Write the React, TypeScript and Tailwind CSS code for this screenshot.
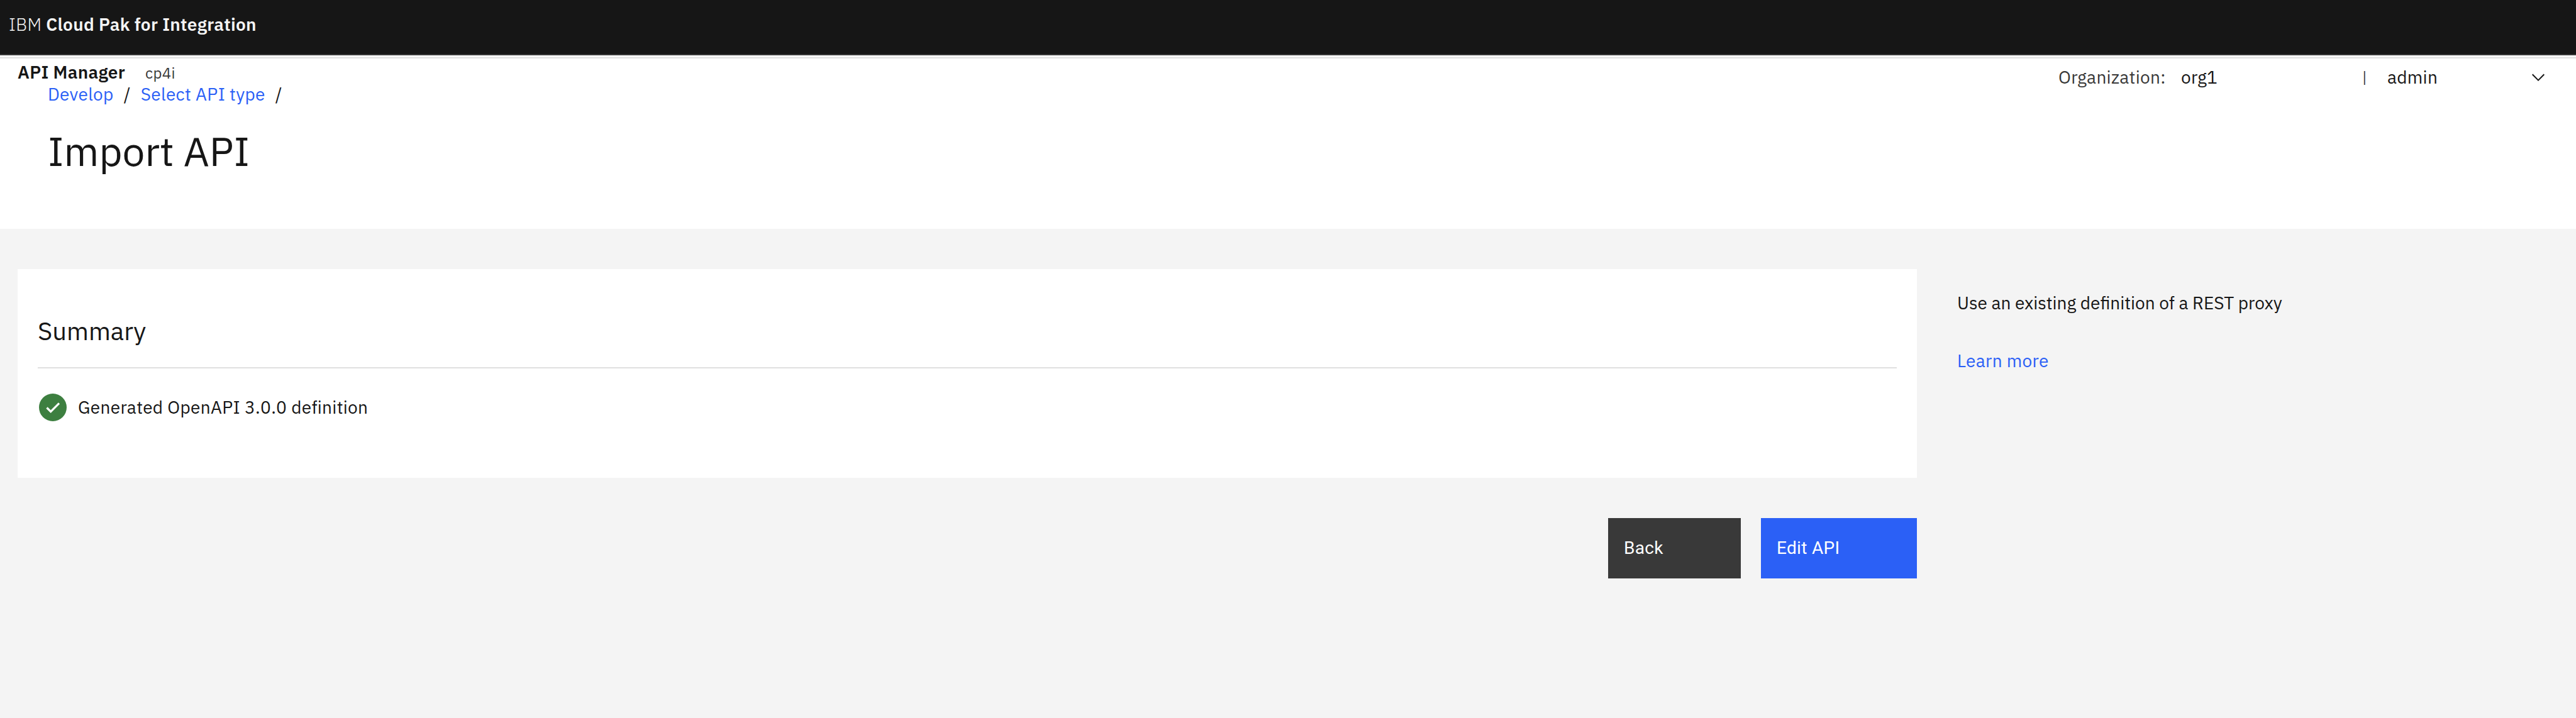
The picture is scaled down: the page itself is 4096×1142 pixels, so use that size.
import type { ReactNode } from "react";

function ChevronDown() {
  return (
    <svg className="h-8 w-8" viewBox="0 0 16 16" fill="currentColor" aria-hidden="true">
      <path d="M8 11L3 6l.7-.7L8 9.6l4.3-4.3.7.7z" />
    </svg>
  );
}

function CheckmarkFilled() {
  return (
    <svg className="h-[44px] w-[44px] text-[#3d7f40]" viewBox="0 0 44 44" aria-hidden="true">
      <circle cx="22" cy="22" r="22" fill="currentColor" />
      <path d="M12.5 22.5L18.7 28.7L32 15.4" fill="none" stroke="#fff" strokeWidth="3.2" />
    </svg>
  );
}

function Link({ children }: { children: ReactNode }) {
  return <a className="text-[#2b60f6]">{children}</a>;
}

function TopBar() {
  return (
    <header className="h-[88px] border-b-2 border-[#393939] bg-[#161616] pt-[21px] pl-[14px] leading-9 whitespace-pre text-[#f4f4f4]">
      <span className="font-light">IBM </span>
      <span className="font-semibold">Cloud Pak for Integration</span>
    </header>
  );
}

function PageHeader() {
  return (
    <section className="flex h-[276px] justify-between bg-white pt-[3px]">
      <div className="grow border-t-2 border-[#e0e0e0] pt-2">
        <div className="flex h-7 items-baseline pl-7 leading-7">
          <span className="font-semibold">API Manager</span>
          <span className="ml-8 text-2xl leading-7 text-[#393939]">cp4i</span>
        </div>
        <nav className="mt-[3px] flex gap-4 pl-[76px] leading-9">
          <Link>Develop</Link>
          <span>/</span>
          <Link>Select API type</Link>
          <span>/</span>
        </nav>
        <h1 className="mt-8 pl-[76px] text-[64px] leading-[80px] tracking-normal">Import API</h1>
      </div>
      <div className="flex border-t-2 border-[#e0e0e0] pt-3 leading-9">
        <span className="w-[195px] text-[#393939]">Organization:</span>
        <span className="w-[288px]">org1</span>
        <span className="w-10 text-2xl leading-9 text-[#393939]">|</span>
        <span className="w-[224px]">admin</span>
        <span className="mr-[44px] pt-[2px]">
          <ChevronDown />
        </span>
      </div>
    </section>
  );
}

function SummaryCard() {
  return (
    <section className="h-[332px] bg-white px-8 pt-[72px]">
      <h2 className="h-[84px] text-[40px] leading-[52px] tracking-normal">Summary</h2>
      <div className="border-t-2 border-[#e0e0e0] pt-10">
        <div className="flex items-center gap-[18px] pl-[2px]">
          <CheckmarkFilled />
          <span className="leading-9">Generated OpenAPI 3.0.0 definition</span>
        </div>
      </div>
    </section>
  );
}

export default function App() {
  return (
    <div className="min-h-[1142px] w-[4096px] bg-[#f4f4f4] font-['IBM_Plex_Sans','Noto_Sans',sans-serif] text-[28px] tracking-[0.32px] text-[#161616]">
      <TopBar />
      <PageHeader />
      <main className="flex gap-16 pt-16 pl-7">
        <div className="w-[3020px]">
          <SummaryCard />
          <div className="mt-16 flex justify-end gap-8 font-[Roboto,sans-serif] leading-9 text-white">
            <button className="h-24 w-[211px] bg-[#393939] pl-[25px] text-left">Back</button>
            <button className="h-24 w-[248px] bg-[#2b60f6] pl-[25px] text-left">Edit API</button>
          </div>
        </div>
        <aside className="pt-9 leading-9">
          <p className="tracking-normal">Use an existing definition of a REST proxy</p>
          <p className="mt-14">
            <Link>Learn more</Link>
          </p>
        </aside>
      </main>
    </div>
  );
}
